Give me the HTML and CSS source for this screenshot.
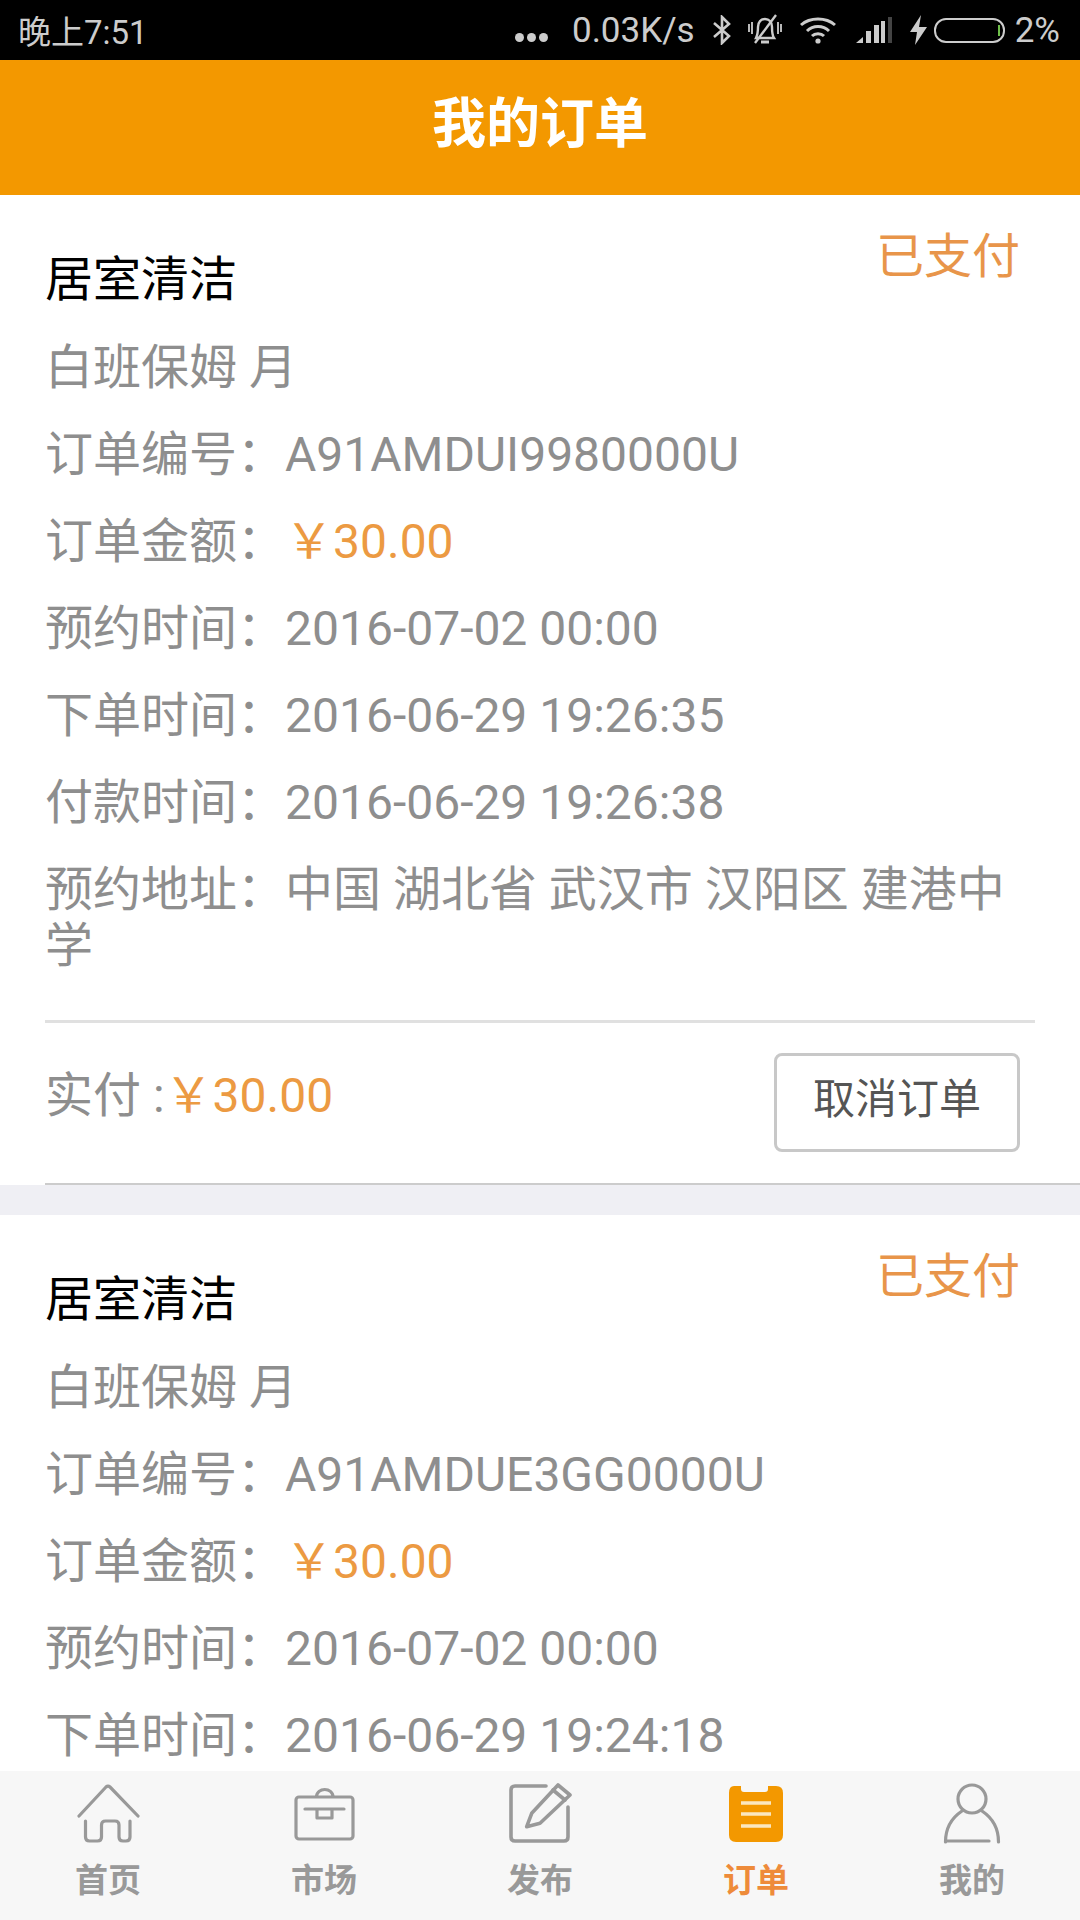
FILE: index.html
```html
<!DOCTYPE html>
<html lang="zh-CN">

<head>
    <meta charset="UTF-8">
    <meta name="viewport" content="width=device-width, initial-scale=1.0">
    <title>我的订单</title>
    <link rel="stylesheet" href="styles.css">
</head>

<body>

    <!-- Status bar -->
    <div class="status-bar">
        <span class="status-time">晚上7:51</span>
        <div class="status-right">
            <span class="status-dots"><i></i><i></i><i></i></span>
            <span class="status-speed">0.03K/s</span>
            <svg class="icon-bt" width="20" height="30" viewBox="0 0 20 30"><path d="M2 8L17 21L10 28V2L17 9L2 22" fill="none" stroke="#ccc" stroke-width="2.6"/></svg>
            <svg class="icon-bell" width="34" height="32" viewBox="0 0 34 32" fill="none" stroke="#ccc" stroke-width="2.4"><path d="M8 24C10 20 10 16 10 13C10 8 13 5 17 5C21 5 24 8 24 13C24 17 24 21 26 24Z"/><path d="M13 28H21" stroke-width="3"/><path d="M1 10V18M4 8V20M30 8V20M33 10V18" stroke-width="1.8"/><path d="M28 1L7 29" stroke-width="2.4"/></svg>
            <svg class="icon-wifi" width="38" height="28" viewBox="0 0 38 28" fill="none" stroke="#ccc" stroke-width="3"><path d="M2 9C11 1 27 1 36 9"/><path d="M8 15C14 9 24 9 30 15"/><path d="M13 20C16 17 22 17 25 20"/><circle cx="19" cy="25" r="2.6" fill="#ccc" stroke="none"/></svg>
            <svg class="icon-signal" width="36" height="28" viewBox="0 0 36 28"><path d="M0 27L7 21V27Z" fill="#ccc"/><rect x="10" y="15" width="5" height="12" fill="#ccc"/><rect x="18" y="9" width="5" height="18" fill="#ccc"/><rect x="25" y="5" width="4" height="22" fill="#ccc"/><rect x="32" y="1" width="4" height="26" fill="#444"/></svg>
            <svg class="icon-bolt" width="17" height="30" viewBox="0 0 17 30"><path d="M11 0L0 17H7L5 30L17 12H9Z" fill="#ccc"/></svg>
            <span class="battery"><span class="battery-level"></span></span>
            <span class="status-pct">2%</span>
        </div>
    </div>

    <h1 class="title-bar">我的订单</h1>

    <!-- Order list -->
    <div class="order-list">

        <div class="order">
            <div class="order-body">
                <div class="order-head">
                    <span class="order-name">居室清洁</span>
                    <span class="order-state">已支付</span>
                </div>
                <p class="row">白班保姆 月</p>
                <p class="row">订单编号：A91AMDUI9980000U</p>
                <p class="row">订单金额：<span class="price">￥30.00</span></p>
                <p class="row">预约时间：2016-07-02 00:00</p>
                <p class="row">下单时间：2016-06-29 19:26:35</p>
                <p class="row">付款时间：2016-06-29 19:26:38</p>
                <p class="row">预约地址：中国 湖北省 武汉市 汉阳区 建港中学</p>
                <div class="order-foot">
                    <span class="paid">实付 :<span class="price">￥30.00</span></span>
                    <button class="cancel-btn">取消订单</button>
                </div>
            </div>
        </div>

        <div class="order">
            <div class="order-body">
                <div class="order-head">
                    <span class="order-name">居室清洁</span>
                    <span class="order-state">已支付</span>
                </div>
                <p class="row">白班保姆 月</p>
                <p class="row">订单编号：A91AMDUE3GG0000U</p>
                <p class="row">订单金额：<span class="price">￥30.00</span></p>
                <p class="row">预约时间：2016-07-02 00:00</p>
                <p class="row">下单时间：2016-06-29 19:24:18</p>
            </div>
        </div>

    </div>

    <!-- Bottom tabs -->
    <div class="tab-bar">
        <div class="tab">
            <svg width="64" height="64" viewBox="0 0 64 64" fill="none" stroke="#999" stroke-width="3.200" stroke-linecap="round" stroke-linejoin="round"><path d="M3 36L30 7Q32 5 34 7L62 36"/><path d="M9.500 41V57Q9.500 61 13.500 61H21.500Q25.500 61 25.500 57V45Q25.500 41 29.500 41H39Q43 41 43 45V57Q43 61 47 61H50Q54 61 54 57V41"/></svg>
            <span>首页</span>
        </div>
        <div class="tab">
            <svg width="64" height="64" viewBox="0 0 64 64" fill="none" stroke="#999" stroke-width="3.200" stroke-linejoin="round"><rect x="4" y="17" width="57" height="42" rx="3"/><path d="M24.500 17C24.500 7 41 7 41 17"/><path d="M13 29H52" stroke-linecap="round"/><path d="M25 29V38H40V29"/></svg>
            <span>市场</span>
        </div>
        <div class="tab">
            <svg width="64" height="64" viewBox="0 0 64 64" fill="none" stroke="#999" stroke-width="3.600" stroke-linecap="round" stroke-linejoin="round"><path d="M38 6H7Q3 6 3 10V57Q3 61 7 61H56Q60 61 60 57V27"/><path d="M18.700 46.700L23.700 33.300L50 5L62 15L32 43.300Z"/><path d="M45 10L57 20"/></svg>
            <span>发布</span>
        </div>
        <div class="tab tab-active">
            <svg width="64" height="64" viewBox="0 0 64 64"><path d="M10 6H17V9Q17 12 20 12H41Q44 12 44 9V6H52Q59 6 59 13V55Q59 62 52 62H12Q5 62 5 55V13Q5 6 10 6Z" fill="#f39800"/><path d="M17 23H47M17 34H47M17 46H47" stroke="#fbe7c0" stroke-width="3.500"/></svg>
            <span>订单</span>
        </div>
        <div class="tab">
            <svg width="64" height="64" viewBox="0 0 64 64" fill="none" stroke="#999" stroke-width="3.200" stroke-linecap="round"><circle cx="32" cy="19" r="14"/><path d="M5.500 62C5.500 46 13 37 22 31M42 31C51 37 58.500 46 58.500 62"/><path d="M6 61H49"/></svg>
            <span>我的</span>
        </div>
    </div>

</body>

</html>
```

FILE: styles.css
```css
* {
    box-sizing: border-box;
}

body {
    margin: 0;
    width: 1080px;
    height: 1920px;
    display: flex;
    flex-direction: column;
    overflow: hidden;
    background-color: #efeff4;
    font-family: Roboto, "Noto Sans CJK SC", sans-serif;
}

/* Status bar */
.status-bar {
    height: 60px;
    flex: none;
    display: flex;
    align-items: center;
    justify-content: space-between;
    padding: 0 20px 0 18px;
    background-color: #000;
    color: #ccc;
    font-size: 35px;
}

.status-time {
    font-size: 33px;
}

.status-right {
    display: flex;
    align-items: center;
}

.status-dots {
    display: flex;
    gap: 3px;
    margin-top: 14px;
    margin-right: 24px;
}

.status-dots i {
    width: 9px;
    height: 9px;
    border-radius: 50%;
    background-color: #ccc;
}

.icon-bt {
    margin-left: 17px;
}

.icon-bell {
    margin-left: 16px;
}

.icon-wifi {
    margin-left: 17px;
}

.icon-signal {
    margin-left: 19px;
}

.icon-bolt {
    margin-left: 18px;
}

.battery {
    width: 71px;
    height: 25px;
    margin-left: 7px;
    padding: 5px 3px;
    display: flex;
    justify-content: flex-end;
    border: 2px solid #ccc;
    border-radius: 12px;
}

.battery-level {
    width: 2px;
    background-color: #6fbf4a;
}

.status-pct {
    margin-left: 10px;
}

/* Title bar */
.title-bar {
    height: 135px;
    flex: none;
    margin: 0;
    padding-top: 20px;
    text-align: center;
    background-color: #f39800;
    color: #fff;
    font-size: 54px;
    font-weight: 700;
}

/* Orders */
.order-list {
    flex: 1;
    min-height: 0;
    overflow: hidden;
}

.order {
    margin-bottom: 30px;
    padding-left: 45px;
    background-color: #fff;
}

.order-body {
    height: 990px;
    border-bottom: 2px solid #ccc;
}

.order-head {
    display: flex;
    justify-content: space-between;
    height: 145px;
    padding: 30px 60px 0 0;
}

.order-name {
    margin-top: 25px;
    font-size: 48px;
    line-height: 60px;
    color: #000;
}

.order-state {
    font-size: 48px;
    line-height: 64px;
    color: #e8954a;
}

.row {
    margin: 0 60px 31px 0;
    font-size: 48px;
    line-height: 56px;
    color: #8e8e8e;
}

.price {
    color: #ec9a42;
}

.order-foot {
    display: flex;
    align-items: center;
    justify-content: space-between;
    height: 161px;
    margin-top: 46px;
    margin-right: 45px;
    padding-right: 15px;
    border-top: 3px solid #e0e0e0;
}

.paid {
    margin-bottom: 22px;
    font-size: 48px;
    color: #8e8e8e;
}

.cancel-btn {
    width: 246px;
    height: 99px;
    padding: 0 0 14px;
    background-color: #fff;
    border: 3px solid #c8c8c8;
    border-radius: 8px;
    color: #555;
    font-family: inherit;
    font-size: 42px;
}

/* Bottom tabs */
.tab-bar {
    height: 149px;
    flex: none;
    display: flex;
    background-color: #f7f7f7;
}

.tab {
    flex: 1;
    display: flex;
    flex-direction: column;
    align-items: center;
    padding-top: 9px;
    color: #999;
    font-size: 33px;
    font-weight: 700;
}

.tab span {
    margin-top: 14px;
    line-height: 46px;
}

.tab-active {
    color: #ee8b3a;
}
```
